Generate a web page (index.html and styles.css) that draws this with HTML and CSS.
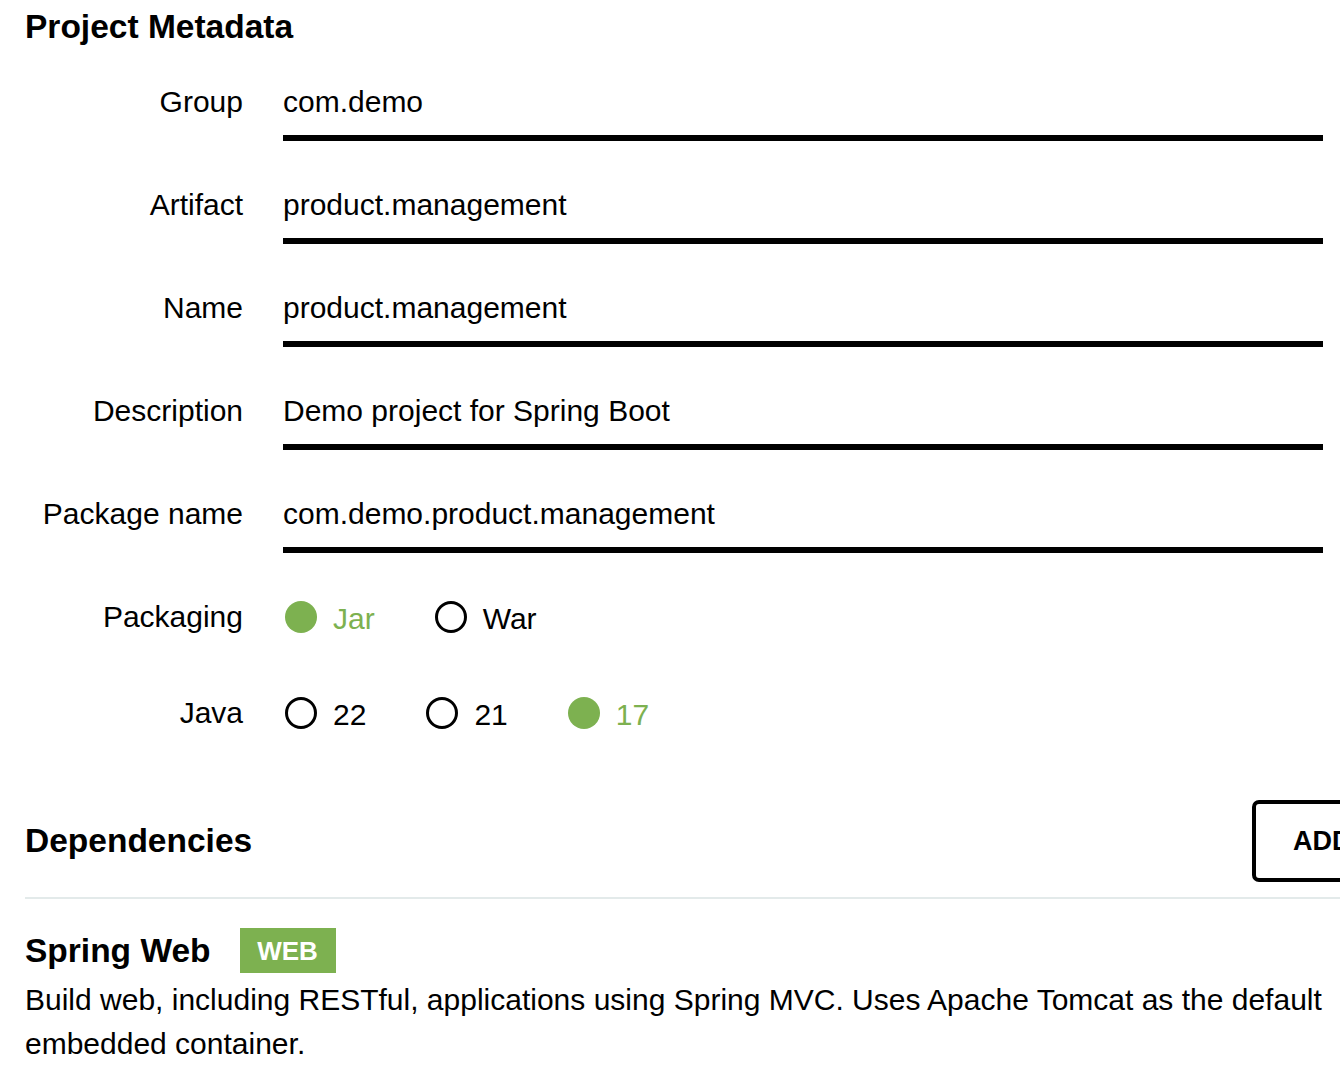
FILE: index.html
```html
<!DOCTYPE html>
<html lang="en">
<head>
<meta charset="utf-8">
<title>Project Metadata</title>
<link rel="stylesheet" href="styles.css">
</head>
<body>
<div class="page">
  <h2 class="section-title">Project Metadata</h2>

  <div class="fields">
    <div class="field">
      <label class="field-label">Group</label>
      <div class="text-input">com.demo</div>
    </div>
    <div class="field">
      <label class="field-label">Artifact</label>
      <div class="text-input">product.management</div>
    </div>
    <div class="field">
      <label class="field-label">Name</label>
      <div class="text-input">product.management</div>
    </div>
    <div class="field">
      <label class="field-label">Description</label>
      <div class="text-input">Demo project for Spring Boot</div>
    </div>
    <div class="field">
      <label class="field-label">Package name</label>
      <div class="text-input">com.demo.product.management</div>
    </div>

    <div class="radio-field packaging">
      <span class="field-label">Packaging</span>
      <div class="radio-group">
        <span class="radio checked"><span class="dot"></span><span class="radio-text">Jar</span></span>
        <span class="radio"><span class="dot"></span><span class="radio-text">War</span></span>
      </div>
    </div>

    <div class="radio-field java">
      <span class="field-label">Java</span>
      <div class="radio-group">
        <span class="radio"><span class="dot"></span><span class="radio-text">22</span></span>
        <span class="radio"><span class="dot"></span><span class="radio-text">21</span></span>
        <span class="radio checked"><span class="dot"></span><span class="radio-text">17</span></span>
      </div>
    </div>
  </div>

  <div class="deps-header">
    <h2 class="section-title">Dependencies</h2>
    <div class="btn-slot">
      <button class="add-btn">ADD DEPENDENCIES... <span class="shortcut">CTRL + B</span></button>
    </div>
  </div>

  <div class="dependency">
    <div class="dep-title">
      <span class="dep-name">Spring Web</span>
      <span class="badge">WEB</span>
    </div>
    <p class="dep-desc">Build web, including RESTful, applications using Spring MVC. Uses Apache Tomcat as the default embedded container.</p>
  </div>
</div>
</body>
</html>
```

FILE: styles.css
```css
html, body {
  margin: 0;
  padding: 0;
  overflow: hidden;
  background: #ffffff;
}

body {
  font-family: "Liberation Sans", Arial, Helvetica, sans-serif;
  color: #000000;
  width: 1340px;
  height: 1076px;
}

.page {
  padding: 8px 0 0 25px;
}

.section-title {
  margin: 0;
  font-size: 33.5px;
  line-height: 38px;
  font-weight: bold;
}

.fields {
  padding-right: 17px;
  padding-top: 38px;
}

.field {
  display: grid;
  grid-template-columns: 218px 1fr;
  column-gap: 40px;
  align-items: baseline;
  margin-bottom: 46px;
}

.field-label {
  font-size: 30px;
  line-height: 36px;
  text-align: right;
}

.text-input {
  font-size: 30px;
  line-height: 36px;
  padding-bottom: 15px;
  border-bottom: 6px solid #000000;
}

.radio-field {
  display: grid;
  grid-template-columns: 218px 1fr;
  column-gap: 40px;
  align-items: center;
  height: 40px;
}

.radio-field.packaging {
  margin-top: -2px;
}

.radio-field.java {
  margin-top: 56px;
}

.radio-group {
  display: flex;
  align-items: center;
  gap: 60px;
  padding-left: 2px;
}

.radio {
  display: inline-flex;
  align-items: center;
  gap: 16px;
  font-size: 30px;
  line-height: 36px;
}

.dot {
  width: 32px;
  height: 32px;
  box-sizing: border-box;
  border-radius: 50%;
  border: 3.5px solid #000000;
  flex: none;
}

.radio.checked .dot {
  border: none;
  background: #7db150;
}

.radio.checked .radio-text {
  color: #7db150;
}

.radio-text {
  position: relative;
  top: 2px;
}

.deps-header {
  display: flex;
  align-items: center;
  margin-top: 67px;
  padding-bottom: 15px;
  border-bottom: 2px solid #e3eaea;
}

.deps-header .section-title {
  flex: 1;
}

.btn-slot {
  flex: 0 0 88px;
  width: 88px;
}

.add-btn {
  display: block;
  white-space: nowrap;
  height: 82px;
  box-sizing: border-box;
  padding: 0 37px;
  border: 4px solid #000000;
  border-radius: 7px;
  background: #ffffff;
  font-family: "Liberation Sans", Arial, Helvetica, sans-serif;
  font-size: 27px;
  font-weight: bold;
  color: #000000;
}

.shortcut {
  margin-left: 12px;
  font-weight: normal;
  color: #666666;
}

.dependency {
  padding-top: 29px;
}

.dep-title {
  display: flex;
  align-items: center;
  gap: 29px;
}

.dep-name {
  font-size: 33.5px;
  font-weight: bold;
  line-height: 45px;
}

.badge {
  display: inline-flex;
  align-items: center;
  justify-content: center;
  width: 96px;
  height: 45px;
  background: #7db150;
  color: #ffffff;
  font-size: 26px;
  font-weight: bold;
  padding-top: 2px;
  box-sizing: border-box;
}

.dep-desc {
  margin: 5px 0 0 0;
  font-size: 30px;
  line-height: 44px;
}
```
